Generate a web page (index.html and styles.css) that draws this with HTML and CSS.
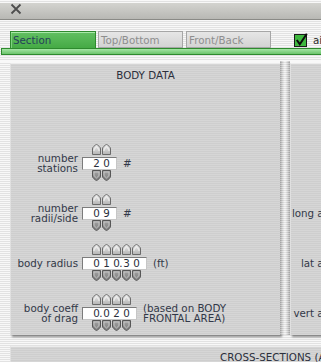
FILE: index.html
```html
<!DOCTYPE html>
<html>
<head>
<meta charset="utf-8">
<link rel="stylesheet" href="styles.css">
</head>
<body>
<svg class="defs" width="0" height="0">
  <defs>
    <linearGradient id="gup" x1="0" y1="0" x2="0" y2="1">
      <stop offset="0" stop-color="#ececec"/>
      <stop offset="1" stop-color="#b4b4b4"/>
    </linearGradient>
    <linearGradient id="gdn" x1="0" y1="0" x2="0" y2="1">
      <stop offset="0" stop-color="#a4a4a4"/>
      <stop offset="1" stop-color="#7c7c7c"/>
    </linearGradient>
    <symbol id="up" viewBox="0 0 9 11">
      <path d="M0.5 10.5 V5 Q0.5 3.6 1.5 2.7 L3.6 0.9 Q4.5 0.2 5.4 0.9 L7.5 2.7 Q8.5 3.6 8.5 5 V10.5 Z" fill="url(#gup)" stroke="#6a6a6a"/>
      <path d="M2 7 V5.4 L4.5 3 L7 5.4 V7" fill="none" stroke="#fafafa" stroke-width="0.9"/>
    </symbol>
    <symbol id="down" viewBox="0 0 9 11">
      <path d="M0.5 0.5 H8.5 V6 Q8.5 7.4 7.5 8.3 L5.4 10.1 Q4.5 10.8 3.6 10.1 L1.5 8.3 Q0.5 7.4 0.5 6 Z" fill="url(#gdn)" stroke="#565656"/>
      <path d="M2 2 H7 V5.6 L4.5 8 L2 5.6 Z" fill="none" stroke="#c9c9c9" stroke-width="0.9"/>
    </symbol>
  </defs>
</svg>

<div class="titlebar">
  <svg class="close" width="12" height="12" viewBox="0 0 12 12">
    <path d="M1.5 1.5 L10.5 10.5 M10.5 1.5 L1.5 10.5" stroke="#4e4e4e" stroke-width="1.8" fill="none"/>
  </svg>
</div>

<div class="tabstrip">
  <div class="tab active">Section</div>
  <div class="tab">Top/Bottom</div>
  <div class="tab">Front/Back</div>
  <div class="check">
    <svg width="14" height="14" viewBox="0 0 14 14">
      <rect x="0.5" y="1.5" width="12" height="12" fill="#3fb83f" stroke="#1b1b1b"/>
      <path d="M2.8 7 L5.8 11.2 L12.8 0.8" fill="none" stroke="#0d0d0d" stroke-width="2"/>
    </svg>
    <span class="check-text">airfoil</span>
  </div>
</div>
<div class="greenbar"></div>

<div class="content">
  <div class="panel body-panel">
    <div class="panel-title">BODY DATA</div>
    <div class="rows">
      <div class="row">
        <div class="label">number<br>stations</div>
        <div class="spinner">
          <div class="arrows up"><svg><use href="#up"/></svg><svg><use href="#up"/></svg></div>
          <div class="field"><span class="d">2</span><span class="d">0</span></div>
          <div class="arrows down"><svg><use href="#down"/></svg><svg><use href="#down"/></svg></div>
        </div>
        <div class="unit">#</div>
      </div>
      <div class="row">
        <div class="label">number<br>radii/side</div>
        <div class="spinner">
          <div class="arrows up"><svg><use href="#up"/></svg><svg><use href="#up"/></svg></div>
          <div class="field"><span class="d">0</span><span class="d">9</span></div>
          <div class="arrows down"><svg><use href="#down"/></svg><svg><use href="#down"/></svg></div>
        </div>
        <div class="unit">#</div>
      </div>
      <div class="row">
        <div class="label">body radius</div>
        <div class="spinner">
          <div class="arrows up"><svg><use href="#up"/></svg><svg><use href="#up"/></svg><svg><use href="#up"/></svg><svg><use href="#up"/></svg><svg><use href="#up"/></svg></div>
          <div class="field"><span class="d">0</span><span class="d">1</span><span class="d">0</span><span class="dot">.</span><span class="d">3</span><span class="d">0</span></div>
          <div class="arrows down"><svg><use href="#down"/></svg><svg><use href="#down"/></svg><svg><use href="#down"/></svg><svg><use href="#down"/></svg><svg><use href="#down"/></svg></div>
        </div>
        <div class="unit">(ft)</div>
      </div>
      <div class="row">
        <div class="label">body coeff<br>of drag</div>
        <div class="spinner">
          <div class="arrows up"><svg><use href="#up"/></svg><svg><use href="#up"/></svg><svg><use href="#up"/></svg><svg><use href="#up"/></svg></div>
          <div class="field"><span class="d">0</span><span class="dot">.</span><span class="d">0</span><span class="d">2</span><span class="d">0</span></div>
          <div class="arrows down"><svg><use href="#down"/></svg><svg><use href="#down"/></svg><svg><use href="#down"/></svg><svg><use href="#down"/></svg></div>
        </div>
        <div class="unit">(based on BODY<br>FRONTAL AREA)</div>
      </div>
    </div>
  </div>
  <div class="groove"></div>
  <div class="panel side-panel">
    <div class="panel-title">&nbsp;</div>
    <div class="rows">
      <div class="row"><div class="rlabel"></div></div>
      <div class="row"><div class="rlabel">long axis</div></div>
      <div class="row"><div class="rlabel">lat axis</div></div>
      <div class="row"><div class="rlabel">vert axis</div></div>
    </div>
  </div>
</div>

<div class="panel bottom-panel">
  <div class="bottom-title">CROSS-SECTIONS (ALONG BODY)</div>
</div>
</body>
</html>
```

FILE: styles.css
```css
html, body {
  margin: 0;
  padding: 0;
}

body {
  width: 321px;
  height: 362px;
  overflow: hidden;
  font-family: "DejaVu Sans", "Liberation Sans", sans-serif;
  font-size: 10.3px;
  color: #323848;
  background: repeating-linear-gradient(to bottom, #f8f8f8 0 1px, #e2e2e2 1px 2px);
}

.defs {
  position: absolute;
  width: 0;
  height: 0;
}

.titlebar {
  height: 16px;
  border-bottom: 1px solid #8a8a86;
  background: linear-gradient(#d3d3cf, #b8b8b4);
}

.close {
  display: block;
  margin: 3px 0 0 10px;
}

.tabstrip {
  display: flex;
  align-items: flex-end;
  padding: 11px 0 0 10px;
  height: 17px;
  white-space: nowrap;
}

.tab {
  box-sizing: border-box;
  height: 17px;
  width: 85px;
  flex: none;
  margin-right: 3px;
  padding: 3px 0 0 2px;
  line-height: 11px;
  border: 1px solid #a6a6a6;
  background: linear-gradient(#e6e6e6, #d3d3d3);
  color: #8e8e8e;
}

.tab.active {
  width: 86px;
  margin-right: 2px;
  border-color: #2f8a2f;
  border-bottom: none;
  background: linear-gradient(#62c062, #45aa45);
  box-shadow: inset 0 1px 0 #a9e8a9, inset 1px 0 0 #7fd07f;
  color: #25405a;
}

.check {
  display: flex;
  align-items: center;
  height: 17px;
  margin-left: 20px;
}

.check svg {
  display: block;
  flex: none;
}

.check-text {
  margin-left: 5px;
  color: #2c2c2c;
}

.greenbar {
  height: 5px;
  margin-left: 1px;
  border: 1px solid #2e8a2e;
  border-right: none;
  background: linear-gradient(#a4e5a4, #6cc46c);
}

.content {
  display: flex;
  margin-top: 6px;
  border-top: 2px solid #f8f8f8;
  padding-left: 10px;
}

.panel {
  box-sizing: border-box;
  flex: none;
  background: repeating-linear-gradient(to bottom, #d6d6d6 0 1px, #cecece 1px 2px);
  border-top: 1px solid #ececec;
  border-left: 1px solid #e0e0e0;
  box-shadow: 2px 2px 2px rgba(0, 0, 0, 0.42);
}

.body-panel {
  width: 270px;
  height: 272px;
}

.side-panel {
  width: 200px;
  height: 272px;
}

.groove {
  flex: none;
  width: 10px;
  height: 274px;
  margin-top: -2px;
  background:
    repeating-linear-gradient(to bottom, rgba(255, 255, 255, 0.25) 0 1px, rgba(0, 0, 0, 0.06) 1px 2px),
    linear-gradient(90deg, #a6a6a6, #dedede 30%, #f6f6f6 50%, #dcdcdc 70%, #a9a9a9);
}

.panel-title {
  text-align: center;
  line-height: 12px;
  padding-top: 5px;
  color: #2b2f3c;
}

.rows {
  display: flex;
  flex-direction: column;
  gap: 13px;
  margin-top: 63px;
}

.row {
  display: flex;
  align-items: center;
  height: 37px;
}

.label {
  width: 67px;
  flex: none;
  margin-right: 4px;
  text-align: right;
  line-height: 10px;
}

.rlabel {
  width: 47px;
  flex: none;
  text-align: right;
  white-space: nowrap;
  line-height: 10px;
}

.spinner {
  display: flex;
  flex-direction: column;
}

.arrows {
  display: flex;
  padding-left: 10px;
  gap: 1px;
}

.arrows.up {
  height: 13px;
  align-items: flex-start;
}

.arrows.down {
  height: 11px;
}

.arrows svg {
  display: block;
  width: 9px;
  height: 11px;
}

.field {
  box-sizing: border-box;
  display: flex;
  height: 13px;
  padding: 0 4px 0 9px;
  line-height: 11px;
  background: #ffffff;
  border: 1px solid;
  border-color: #7c7c7c #c6c6c6 #c6c6c6 #7c7c7c;
  color: #2a2e3a;
}

.d {
  width: 9px;
  margin-right: 1px;
  text-align: center;
}

.dot {
  width: 0;
  display: flex;
  justify-content: center;
  margin-left: -1px;
  margin-right: 1px;
}

.unit {
  margin-left: 6px;
  line-height: 10px;
  white-space: nowrap;
}

.bottom-panel {
  width: 420px;
  height: 40px;
  margin: 11px 0 0 10px;
}

.bottom-title {
  padding: 4px 0 0 209px;
  line-height: 12px;
  white-space: nowrap;
  color: #2b2f3c;
}
```
